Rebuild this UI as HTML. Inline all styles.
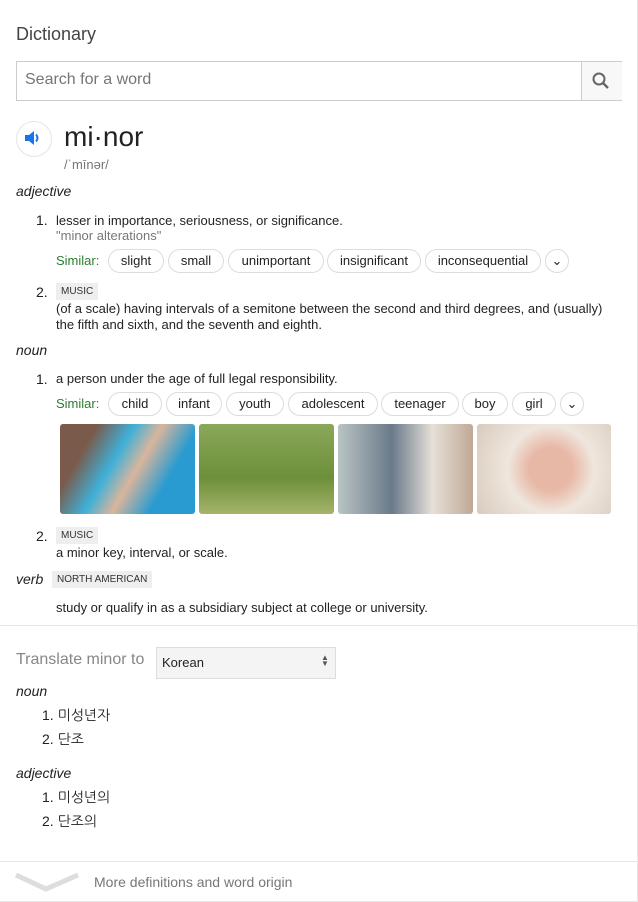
<!DOCTYPE html>
<html><head><meta charset="utf-8"><style>
body{margin:0;width:638px;height:902px;background:#fff;font-family:"Liberation Sans",Arial,sans-serif;color:#222;position:relative;overflow:hidden}
.a{position:absolute;white-space:nowrap}
.chip{position:absolute;top:0;height:22px;border:1px solid #dadce0;border-radius:12px;font-size:13px;line-height:22px;text-align:center;color:#222}
.tag{position:absolute;background:#eee;font-size:10px;color:#333;padding:0 5px;height:17px;line-height:17px}
.s13{font-size:13px}
i{font-style:italic}
</style></head><body>
<div style="position:absolute;left:0;top:0;width:637px;height:901px;border-right:1px solid #e6e6e6;border-bottom:1px solid #e6e6e6"></div>
<div class="a" style="left:16px;top:24px;font-size:18px;color:#444">Dictionary</div>
<div style="position:absolute;left:16px;top:61px;width:604px;height:38px;border:1px solid #ccc"></div>
<div class="a" style="left:25px;top:71px;font-size:16px;color:#757575">Search for a word</div>
<div style="position:absolute;left:581px;top:62px;width:40px;height:38px;background:#f8f8f8;border-left:1px solid #ccc"></div>
<svg class="a" style="left:591px;top:71px" width="20" height="20" viewBox="0 0 20 20"><circle cx="8" cy="8" r="5.5" fill="none" stroke="#666" stroke-width="2"/><path d="M12 12l5 5" stroke="#666" stroke-width="2.4"/></svg>
<div style="position:absolute;left:16px;top:121px;width:34px;height:34px;border:1px solid #e5e5e5;border-radius:50%"></div>
<svg class="a" style="left:24px;top:130px" width="18" height="16" viewBox="0 0 18 16"><path d="M1 5h4l5-4v14l-5-4H1z" fill="#1a73e8"/><path d="M12 4.5q3 3.5 0 7" fill="none" stroke="#1a73e8" stroke-width="2"/></svg>
<div class="a" style="left:64px;top:121px;font-size:28px;color:#222">mi·nor</div>
<div class="a" style="left:64px;top:157px;font-size:13px;color:#777">/ˈmīnər/</div>
<div class="a" style="left:16px;top:183px;font-size:14px"><i>adjective</i></div>
<div class="a" style="left:36px;top:212px;font-size:14px">1.</div>
<div class="a s13" style="left:56px;top:213px">lesser in importance, seriousness, or significance.</div>
<div class="a s13" style="left:56px;top:228px;color:#777">"minor alterations"</div>
<div style="position:absolute;left:0;top:249px;width:638px;height:24px">
<div class="a s13" style="left:56px;top:4px;color:#2e7d32">Similar:</div>
<div class="chip" style="left:108px;width:54px">slight</div>
<div class="chip" style="left:168px;width:54px">small</div>
<div class="chip" style="left:228px;width:94px">unimportant</div>
<div class="chip" style="left:327px;width:92px">insignificant</div>
<div class="chip" style="left:425px;width:114px">inconsequential</div>
<div class="chip" style="left:545px;width:22px">⌄</div>
</div>
<div class="a" style="left:36px;top:284px;font-size:14px">2.</div>
<div class="tag" style="left:56px;top:283px">MUSIC</div>
<div class="a s13" style="left:56px;top:301px;line-height:16px;white-space:normal;width:560px">(of a scale) having intervals of a semitone between the second and third degrees, and (usually) the fifth and sixth, and the seventh and eighth.</div>
<div class="a" style="left:16px;top:342px;font-size:14px"><i>noun</i></div>
<div class="a" style="left:36px;top:371px;font-size:14px">1.</div>
<div class="a s13" style="left:56px;top:371px">a person under the age of full legal responsibility.</div>
<div style="position:absolute;left:0;top:392px;width:638px;height:24px">
<div class="a s13" style="left:56px;top:4px;color:#2e7d32">Similar:</div>
<div class="chip" style="left:108px;width:52px">child</div>
<div class="chip" style="left:166px;width:54px">infant</div>
<div class="chip" style="left:226px;width:56px">youth</div>
<div class="chip" style="left:288px;width:88px">adolescent</div>
<div class="chip" style="left:381px;width:76px">teenager</div>
<div class="chip" style="left:462px;width:44px">boy</div>
<div class="chip" style="left:512px;width:42px">girl</div>
<div class="chip" style="left:560px;width:22px">⌄</div>
</div>
<div class="a" style="left:60px;top:424px;width:135px;height:90px;border-radius:3px;background:linear-gradient(120deg,#7a5a4a 0 20%,#3fb0d8 40%,#d9b59c 55%,#2a9bd0 75%)"></div>
<div class="a" style="left:199px;top:424px;width:135px;height:90px;border-radius:3px;background:linear-gradient(180deg,#8aa85a,#6d8f3a 60%,#a5b46a)"></div>
<div class="a" style="left:338px;top:424px;width:135px;height:90px;border-radius:3px;background:linear-gradient(90deg,#b9c4c4,#6a7a8a 40%,#e6e0d8 70%,#c0a896)"></div>
<div class="a" style="left:477px;top:424px;width:134px;height:90px;border-radius:3px;background:radial-gradient(circle at 55% 50%,#e8b8a6 0 25%,#efe6dd 50%,#d8cbbd)"></div>
<div class="a" style="left:36px;top:528px;font-size:14px">2.</div>
<div class="tag" style="left:56px;top:527px">MUSIC</div>
<div class="a s13" style="left:56px;top:545px">a minor key, interval, or scale.</div>
<div class="a" style="left:16px;top:571px;font-size:14px"><i>verb</i></div>
<div class="tag" style="left:52px;top:571px">NORTH AMERICAN</div>
<div class="a s13" style="left:56px;top:600px">study or qualify in as a subsidiary subject at college or university.</div>
<div style="position:absolute;left:0;top:625px;width:638px;height:1px;background:#e6e6e6"></div>
<div class="a" style="left:16px;top:651px;font-size:16px;color:#878787">Translate minor to</div>
<div style="position:absolute;left:156px;top:647px;width:178px;height:30px;border:1px solid #ddd;background:#f4f4f4"></div>
<div class="a s13" style="left:162px;top:655px;color:#222">Korean</div>
<div class="a" style="left:321px;top:655px;font-size:8px;line-height:6px;color:#555">▲<br>▼</div>
<div class="a" style="left:16px;top:683px;font-size:14px"><i>noun</i></div>
<div class="a" style="left:42px;top:707px;font-size:14px;font-family:'Liberation Sans','NanumGothic',sans-serif">1. 미성년자</div>
<div class="a" style="left:42px;top:731px;font-size:14px;font-family:'Liberation Sans','NanumGothic',sans-serif">2. 단조</div>
<div class="a" style="left:16px;top:765px;font-size:14px"><i>adjective</i></div>
<div class="a" style="left:42px;top:789px;font-size:14px;font-family:'Liberation Sans','NanumGothic',sans-serif">1. 미성년의</div>
<div class="a" style="left:42px;top:813px;font-size:14px;font-family:'Liberation Sans','NanumGothic',sans-serif">2. 단조의</div>
<div style="position:absolute;left:0;top:861px;width:638px;height:1px;background:#e6e6e6"></div>
<svg class="a" style="left:14px;top:870px" width="66" height="24" viewBox="0 0 66 24"><path d="M2 5l30 14 32-14" fill="none" stroke="#ddd" stroke-width="5"/></svg>
<div class="a" style="left:94px;top:874px;font-size:14px;color:#777">More definitions and word origin</div>
</body></html>
